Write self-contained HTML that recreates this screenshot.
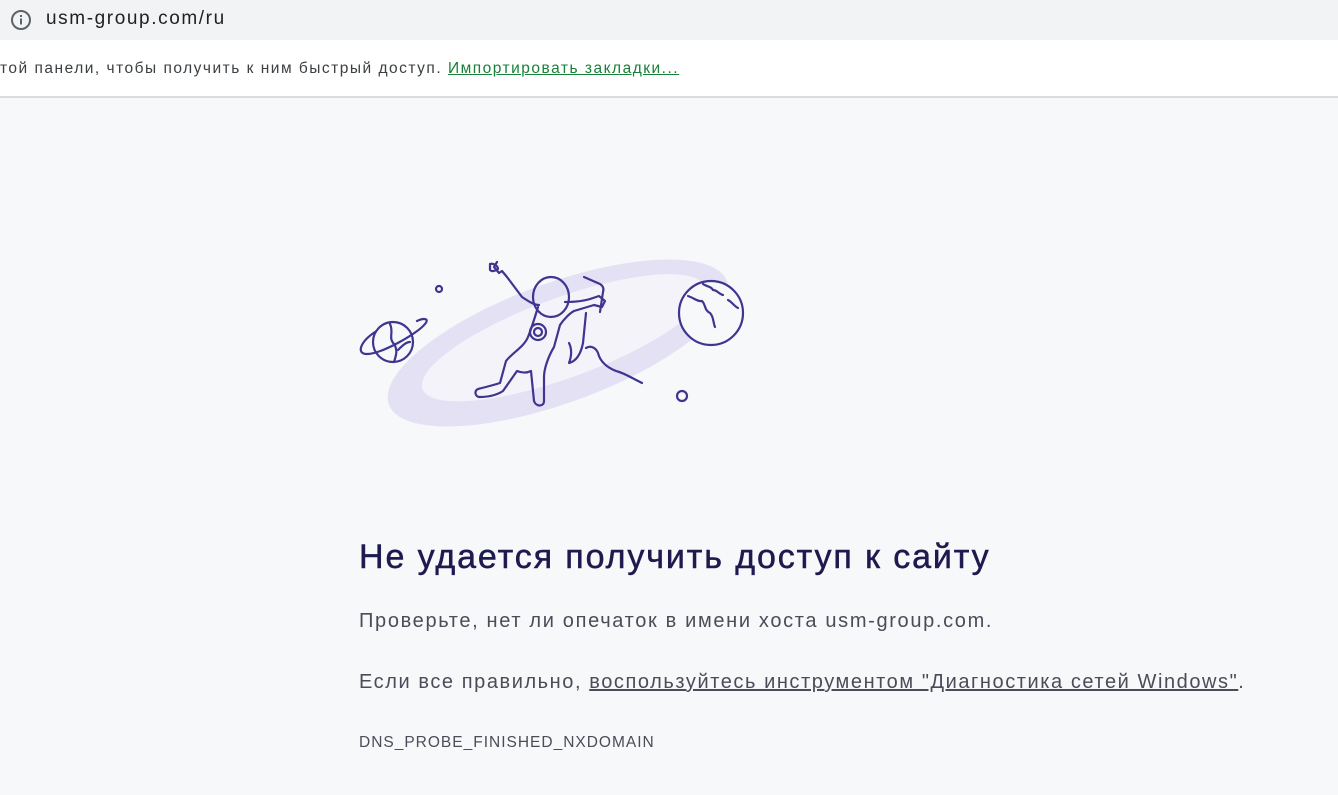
<!DOCTYPE html>
<html><head><meta charset="utf-8"><style>
body{margin:0;width:1338px;height:795px;overflow:hidden;background:#f7f8fa;font-family:"Liberation Sans",sans-serif;position:relative}
.top{position:absolute;left:0;top:0;width:1338px;height:40px;background:#f1f3f4}
.url{position:absolute;left:46px;top:8px;font-size:19px;color:#202124;letter-spacing:1.6px}
.bm{position:absolute;left:0;top:40px;width:1338px;height:56px;background:#fff;border-bottom:2px solid #dadce0}
.bmt{position:absolute;left:0;top:60px;font-size:15.5px;color:#3c4043;white-space:nowrap;letter-spacing:1.5px}
.bmt a{color:#188038;text-decoration:underline}
h1{position:absolute;left:359px;top:538px;margin:0;font-size:34px;font-weight:normal;color:#1f1a4e;letter-spacing:1.9px;-webkit-text-stroke:.5px #1f1a4e;white-space:nowrap}
.p{position:absolute;left:359px;font-size:20px;color:#4d4b58;white-space:nowrap}
.p u{text-decoration:underline}
.c{position:absolute;left:359px;top:734px;font-size:15.5px;color:#4d4b58;letter-spacing:1px}
</style></head><body>
<div class="top"></div>
<svg style="position:absolute;left:10px;top:9px" width="22" height="22" viewBox="0 0 22 22"><circle cx="11" cy="11" r="9" fill="none" stroke="#5f6368" stroke-width="2"/><rect x="10" y="9.5" width="2" height="6" fill="#5f6368"/><rect x="10" y="6" width="2" height="2" fill="#5f6368"/></svg>
<div class="url">usm-group.com/ru</div>
<div class="bm"></div>
<div class="bmt">той панели, чтобы получить к ним быстрый доступ. <a>Импортировать закладки...</a></div>
<svg style="position:absolute;left:0;top:0" width="1338" height="795">
<g transform="rotate(-20 558 343)"><ellipse cx="558" cy="343" rx="180" ry="60" fill="#e4e1f5"/><ellipse cx="565" cy="340" rx="150" ry="40" fill="#f4f3fa"/></g>
<g fill="none" stroke="#3f3590" stroke-width="2.2" stroke-linecap="round" stroke-linejoin="round">
<circle cx="711" cy="313" r="32" fill="#f7f8fa"/>
<path d="M688 296c6 2 10 6 14 5 4 4 2 9 8 12 4 4 3 10 5 14M703 284c4 3 8 2 10 6 4 0 6 4 10 5M728 300c4 2 6 6 10 8"/>
<circle cx="393" cy="342" r="20" fill="#f7f8fa"/>
<path d="M375 332c-15 10-19 22-8 22 14 0 50-20 58-30 5-6-2-6-8-3M390 324c4 8-2 14 4 20 4 6 2 12 0 18M398 350c4-4 8-8 12-8"/>
<circle cx="439" cy="289" r="3"/><circle cx="682" cy="396" r="5"/>
<path d="M584 277l16 7c3 2 4 5 3 8l-3 20M569 343c3 6 3 12 0 20 8-2 12-10 14-20l3-30"/>
<path d="M497 262l-3 5 5 6 3-2 5 6 15 20c6 4 12 8 17 8 M538 307c-3 10-6 20-10 30 -4 10-16 16-22 24l-6 22c-6 2-14 4-22 6-4 2-3 7 1 8 10 0 18-2 24-6l14-20c5 2 10 2 14 0l3 30c2 6 10 6 10 0l0-24c0-8 4-20 10-30l6-22c4-6 10-12 14-14l20-6 8 2 3-6-6-5-6 2c-8 3-20 4-28 4"/>
<path d="M490 264c4-1 8 2 8 5 -3 2-6 3-8 1z"/>
<ellipse cx="551" cy="297" rx="18" ry="20"/>
<circle cx="538" cy="332" r="8"/><circle cx="538" cy="332" r="4"/>
<path d="M586 348c5-3 10 0 12 5 2 8 8 14 18 18 8 2 14 6 26 12"/>
</g>
</svg>
<h1>Не удается получить доступ к сайту</h1>
<div class="p" style="top:610px;letter-spacing:1.66px">Проверьте, нет ли опечаток в имени хоста usm-group.com.</div>
<div class="p" style="top:671px;letter-spacing:1.57px">Если все правильно, <u>воспользуйтесь инструментом "Диагностика сетей Windows"</u>.</div>
<div class="c">DNS_PROBE_FINISHED_NXDOMAIN</div>
</body></html>
